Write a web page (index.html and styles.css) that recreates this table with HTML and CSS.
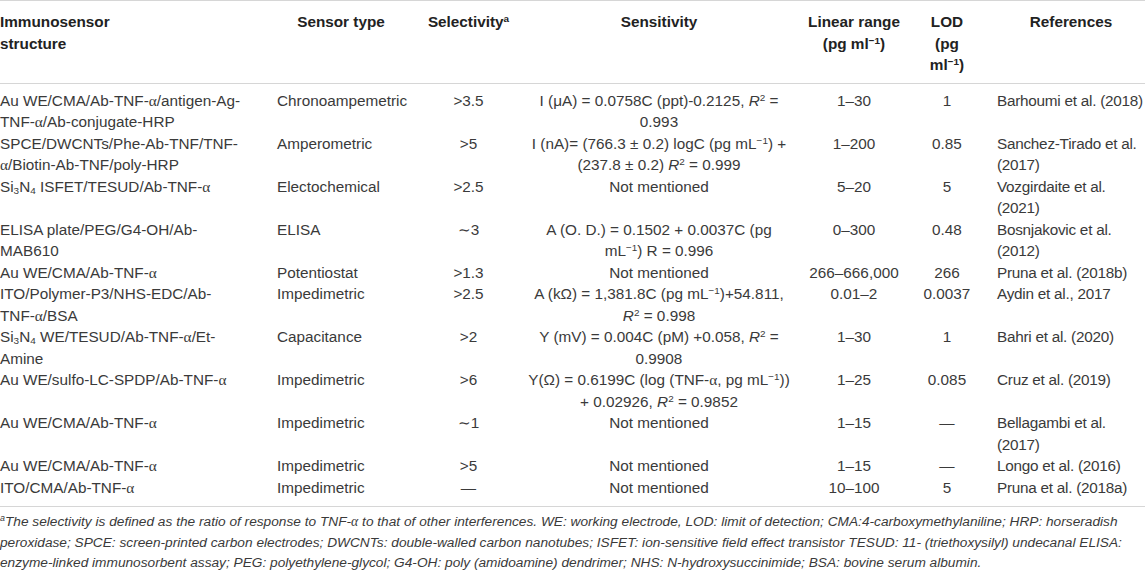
FILE: index.html
```html
<!DOCTYPE html>
<html lang="en">
<head>
    <meta charset="UTF-8">
    <meta name="viewport" content="width=device-width, initial-scale=1.0">
    <title>Immunosensors for TNF-α</title>
    <link rel="stylesheet" href="styles.css">
</head>
<body>
    <table class="data">
        <colgroup>
            <col class="w-struct">
            <col class="w-type">
            <col class="w-sel">
            <col class="w-sens">
            <col class="w-range">
            <col class="w-lod">
            <col class="w-ref">
        </colgroup>
        <thead>
            <tr>
                <th class="c-struct">Immunosensor<br>structure</th>
                <th class="c-type">Sensor type</th>
                <th>Selectivity<sup>a</sup></th>
                <th>Sensitivity</th>
                <th>Linear range<br>(pg ml<sup>−1</sup>)</th>
                <th>LOD<br>(pg<br>ml<sup>−1</sup>)</th>
                <th class="c-ref">References</th>
            </tr>
        </thead>
        <tbody>
            <tr>
                <td class="c-struct">Au WE/CMA/Ab-TNF-<span class="gr">α</span>/antigen-Ag-<br>TNF-<span class="gr">α</span>/Ab-conjugate-HRP</td>
                <td class="c-type">Chronoampemetric</td>
                <td>&gt;3.5</td>
                <td>I (μA) = 0.0758C (ppt)-0.2125, <i>R</i><sup>2</sup> =<br>0.993</td>
                <td>1–30</td>
                <td>1</td>
                <td class="c-ref">Barhoumi et al. (2018)</td>
            </tr>
            <tr>
                <td class="c-struct">SPCE/DWCNTs/Phe-Ab-TNF/TNF-<br><span class="gr">α</span>/Biotin-Ab-TNF/poly-HRP</td>
                <td class="c-type">Amperometric</td>
                <td>&gt;5</td>
                <td>I (nA)= (766.3 ± 0.2) logC (pg mL<sup>−1</sup>) +<br>(237.8 ± 0.2) <i>R</i><sup>2</sup> = 0.999</td>
                <td>1–200</td>
                <td>0.85</td>
                <td class="c-ref">Sanchez-Tirado et al.<br>(2017)</td>
            </tr>
            <tr>
                <td class="c-struct">Si<sub>3</sub>N<sub>4</sub> ISFET/TESUD/Ab-TNF-<span class="gr">α</span></td>
                <td class="c-type">Electochemical</td>
                <td>&gt;2.5</td>
                <td>Not mentioned</td>
                <td>5–20</td>
                <td>5</td>
                <td class="c-ref">Vozgirdaite et al.<br>(2021)</td>
            </tr>
            <tr>
                <td class="c-struct">ELISA plate/PEG/G4-OH/Ab-<br>MAB610</td>
                <td class="c-type">ELISA</td>
                <td>∼3</td>
                <td>A (O. D.) = 0.1502 + 0.0037C (pg<br>mL<sup>−1</sup>) R = 0.996</td>
                <td>0–300</td>
                <td>0.48</td>
                <td class="c-ref">Bosnjakovic et al.<br>(2012)</td>
            </tr>
            <tr>
                <td class="c-struct">Au WE/CMA/Ab-TNF-<span class="gr">α</span></td>
                <td class="c-type">Potentiostat</td>
                <td>&gt;1.3</td>
                <td>Not mentioned</td>
                <td>266–666,000</td>
                <td>266</td>
                <td class="c-ref">Pruna et al. (2018b)</td>
            </tr>
            <tr>
                <td class="c-struct">ITO/Polymer-P3/NHS-EDC/Ab-<br>TNF-<span class="gr">α</span>/BSA</td>
                <td class="c-type">Impedimetric</td>
                <td>&gt;2.5</td>
                <td>A (kΩ) = 1,381.8C (pg mL<sup>−1</sup>)+54.811,<br><i>R</i><sup>2</sup> = 0.998</td>
                <td>0.01–2</td>
                <td>0.0037</td>
                <td class="c-ref">Aydin et al., 2017</td>
            </tr>
            <tr>
                <td class="c-struct">Si<sub>3</sub>N<sub>4</sub> WE/TESUD/Ab-TNF-<span class="gr">α</span>/Et-<br>Amine</td>
                <td class="c-type">Capacitance</td>
                <td>&gt;2</td>
                <td>Y (mV) = 0.004C (pM) +0.058, <i>R</i><sup>2</sup> =<br>0.9908</td>
                <td>1–30</td>
                <td>1</td>
                <td class="c-ref">Bahri et al. (2020)</td>
            </tr>
            <tr>
                <td class="c-struct">Au WE/sulfo-LC-SPDP/Ab-TNF-<span class="gr">α</span></td>
                <td class="c-type">Impedimetric</td>
                <td>&gt;6</td>
                <td>Y(Ω) = 0.6199C (log (TNF-<span class="gr">α</span>, pg mL<sup>−1</sup>))<br>+ 0.02926, <i>R</i><sup>2</sup> = 0.9852</td>
                <td>1–25</td>
                <td>0.085</td>
                <td class="c-ref">Cruz et al. (2019)</td>
            </tr>
            <tr>
                <td class="c-struct">Au WE/CMA/Ab-TNF-<span class="gr">α</span></td>
                <td class="c-type">Impedimetric</td>
                <td>∼1</td>
                <td>Not mentioned</td>
                <td>1–15</td>
                <td>—</td>
                <td class="c-ref">Bellagambi et al.<br>(2017)</td>
            </tr>
            <tr>
                <td class="c-struct">Au WE/CMA/Ab-TNF-<span class="gr">α</span></td>
                <td class="c-type">Impedimetric</td>
                <td>&gt;5</td>
                <td>Not mentioned</td>
                <td>1–15</td>
                <td>—</td>
                <td class="c-ref">Longo et al. (2016)</td>
            </tr>
            <tr>
                <td class="c-struct">ITO/CMA/Ab-TNF-<span class="gr">α</span></td>
                <td class="c-type">Impedimetric</td>
                <td>—</td>
                <td>Not mentioned</td>
                <td>10–100</td>
                <td>5</td>
                <td class="c-ref">Pruna et al. (2018a)</td>
            </tr>
        </tbody>
    </table>

    <p class="note"><sup>a</sup>The selectivity is defined as the ratio of response to TNF-<span class="gr">α</span> to that of other interferences. WE: working electrode, LOD: limit of detection; CMA:4-carboxymethylaniline; HRP: horseradish<br>peroxidase; SPCE: screen-printed carbon electrodes; DWCNTs: double-walled carbon nanotubes; ISFET: ion-sensitive field effect transistor TESUD: 11- (triethoxysilyl) undecanal ELISA:<br>enzyme-linked immunosorbent assay; PEG: polyethylene-glycol; G4-OH: poly (amidoamine) dendrimer; NHS: N-hydroxysuccinimide; BSA: bovine serum albumin.</p>
</body>
</html>
```

FILE: styles.css
```css
body {
    margin: 0;
    font-family: "Liberation Sans", Arial, sans-serif;
    color: #3a3a3a;
    background-color: #fff;
}
.data {
    width: 1145px;
    border-collapse: collapse;
    table-layout: fixed;
    font-size: 15.3px;
    line-height: 21.5px;
}
.w-struct { width: 277px; }
.w-type { width: 136px; }
.w-sel { width: 111px; }
.w-sens { width: 270px; }
.w-range { width: 120px; }
.w-lod { width: 66px; }
.w-ref { width: 165px; }

.data th {
    font-weight: bold;
    color: #222;
    text-align: center;
    vertical-align: top;
    padding: 10px 0 7px;
    border-top: 1px solid #d6d6d6;
    border-bottom: 1px solid #d6d6d6;
}
.data td {
    text-align: center;
    vertical-align: top;
    padding: 0;
    white-space: nowrap;
}
.data tbody tr:first-child td {
    padding-top: 6px;
}
.data tbody tr:last-child td {
    padding-bottom: 8px;
    border-bottom: 1px solid #d6d6d6;
}
.data .c-struct {
    text-align: left;
}
.data td.c-type {
    text-align: left;
}
.data th.c-type {
    padding-right: 8px;
}
.data .c-ref {
    padding-left: 17px;
}
.data td.c-ref {
    text-align: left;
    letter-spacing: -0.25px;
}
.gr {
    font-family: "Liberation Serif", serif;
}
sup, sub {
    font-size: 0.65em;
    line-height: 0;
}
sup {
    vertical-align: 0.55em;
}
sub {
    vertical-align: -0.2em;
}
.note {
    margin: 0;
    padding-top: 5px;
    font-size: 13.7px;
    line-height: 20.5px;
    font-style: italic;
    white-space: nowrap;
}
.note sup {
    font-style: italic;
}
```
